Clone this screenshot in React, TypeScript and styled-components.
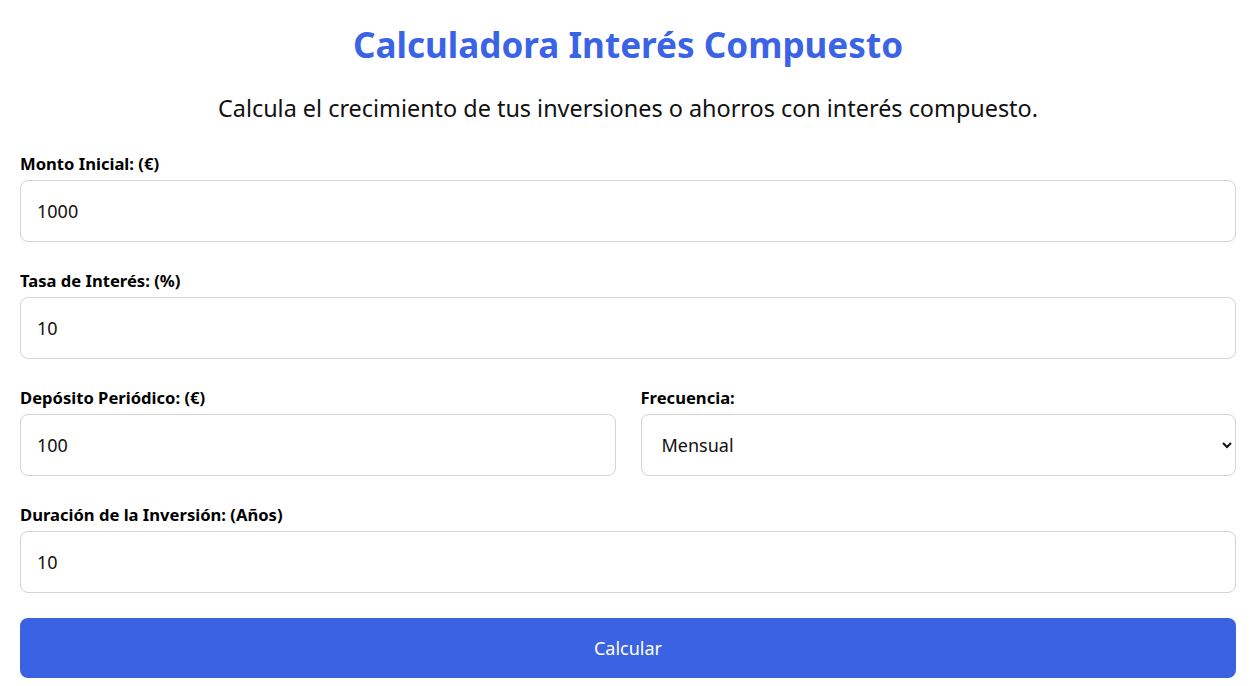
import React, { useState } from "react";
import styled, { createGlobalStyle } from "styled-components";

const GlobalStyle = createGlobalStyle`
  * { box-sizing: border-box; }
  html, body { margin: 0; padding: 0; background: #ffffff; }
  body { font-family: "Segoe UI", "Noto Sans", "Open Sans", sans-serif; color: #111; }
`;

const Page = styled.main`
  padding: 0 17px 0 20px;
`;

const Title = styled.h1`
  margin: 22px 0 0;
  text-align: center;
  font-size: 35.1px;
  line-height: 44px;
  font-weight: 700;
  color: #3b63e6;
`;

const Subtitle = styled.p`
  margin: 27px 0 0;
  text-align: center;
  font-size: 23.4px;
  line-height: 30px;
  color: #111;
`;

const Form = styled.form`
  display: flex;
  flex-direction: column;
  gap: 29px;
  margin-top: 31px;
`;

const Row = styled.div`
  display: grid;
  grid-template-columns: 1fr 1fr;
  gap: 25px;
`;

const Field = styled.div`
  display: flex;
  flex-direction: column;
  gap: 7px;
`;

const Label = styled.label`
  font-size: 16.6px;
  line-height: 19px;
  font-weight: 700;
  color: #000;
`;

const Input = styled.input`
  height: 62px;
  width: 100%;
  border: 1px solid #d3d3d8;
  border-radius: 8px;
  padding: 0 16px;
  font-family: inherit;
  font-size: 18px;
  color: #111;
  background: #fff;
  outline: none;
`;

const Select = styled.select`
  height: 62px;
  width: 100%;
  border: 1px solid #d3d3d8;
  border-radius: 8px;
  padding: 0 12px 0 16px;
  font-family: inherit;
  font-size: 18px;
  color: #111;
  background: #fff;
  outline: none;
`;

const Button = styled.button`
  height: 60px;
  width: 100%;
  border: none;
  border-radius: 8px;
  background: #3a62e3;
  color: #fff;
  font-family: inherit;
  font-size: 18px;
  cursor: pointer;
  margin-top: -4px;
`;

export default function App() {
  const [monto, setMonto] = useState("1000");
  const [tasa, setTasa] = useState("10");
  const [deposito, setDeposito] = useState("100");
  const [freq, setFreq] = useState("mensual");
  const [anos, setAnos] = useState("10");

  return (
    <>
      <GlobalStyle />
      <Page>
        <Title>Calculadora Interés Compuesto</Title>
        <Subtitle>Calcula el crecimiento de tus inversiones o ahorros con interés compuesto.</Subtitle>
        <Form onSubmit={(e) => e.preventDefault()}>
          <Field>
            <Label htmlFor="monto">Monto Inicial: (€)</Label>
            <Input id="monto" type="text" value={monto} onChange={(e) => setMonto(e.target.value)} />
          </Field>
          <Field>
            <Label htmlFor="tasa">Tasa de Interés: (%)</Label>
            <Input id="tasa" type="text" value={tasa} onChange={(e) => setTasa(e.target.value)} />
          </Field>
          <Row>
            <Field>
              <Label htmlFor="deposito">Depósito Periódico: (€)</Label>
              <Input id="deposito" type="text" value={deposito} onChange={(e) => setDeposito(e.target.value)} />
            </Field>
            <Field>
              <Label htmlFor="freq">Frecuencia:</Label>
              <Select id="freq" value={freq} onChange={(e) => setFreq(e.target.value)}>
                <option value="mensual">Mensual</option>
                <option value="trimestral">Trimestral</option>
                <option value="anual">Anual</option>
              </Select>
            </Field>
          </Row>
          <Field>
            <Label htmlFor="anos">Duración de la Inversión: (Años)</Label>
            <Input id="anos" type="text" value={anos} onChange={(e) => setAnos(e.target.value)} />
          </Field>
          <Button type="submit">Calcular</Button>
        </Form>
      </Page>
    </>
  );
}
